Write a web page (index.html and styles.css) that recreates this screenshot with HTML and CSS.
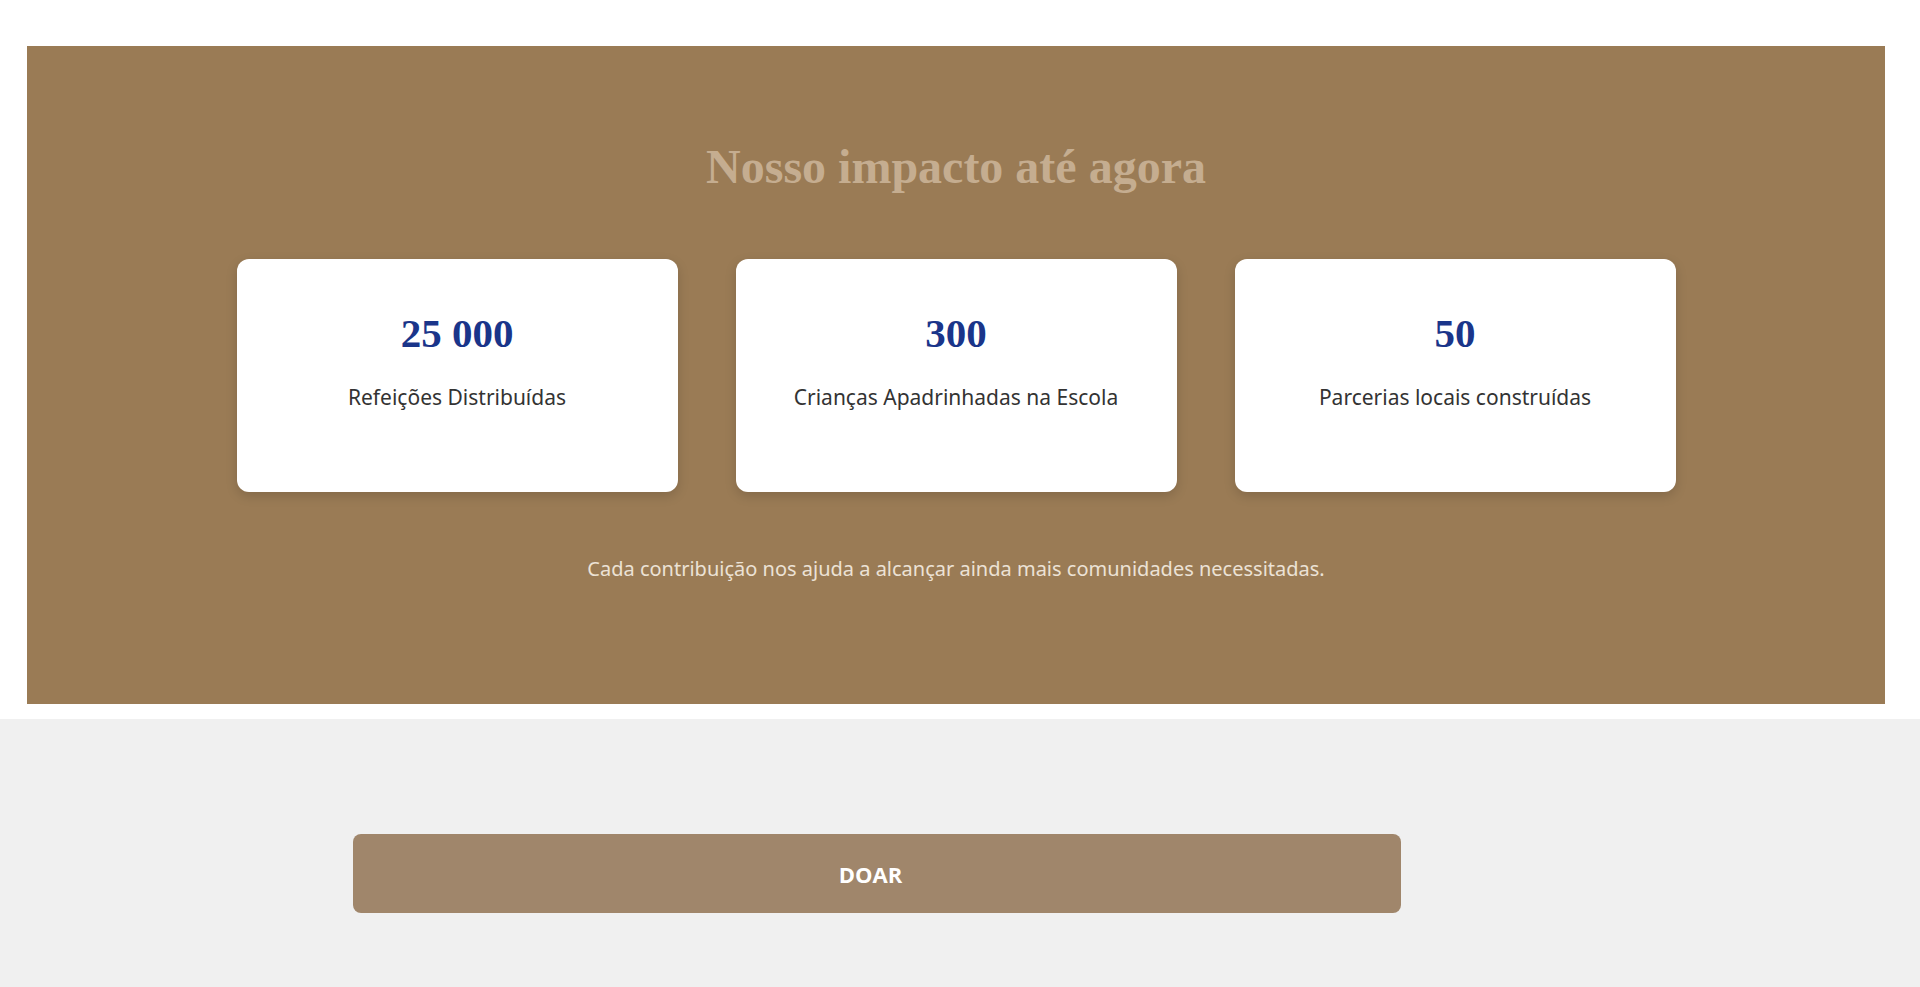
FILE: index.html
```html
<!DOCTYPE html>
<html lang="pt-br">
<head>
  <meta charset="UTF-8">
  <meta name="viewport" content="width=device-width, initial-scale=1">
  <title>Nosso impacto</title>
  <link rel="stylesheet" href="styles.css">
</head>
<body>

  <section class="impacto">
    <h2 class="impacto-titulo">Nosso impacto até agora</h2>

    <div class="impacto-cards">
      <div class="card">
        <span class="card-numero">25 000</span>
        <p class="card-texto">Refeições Distribuídas</p>
      </div>
      <div class="card">
        <span class="card-numero">300</span>
        <p class="card-texto">Crianças Apadrinhadas na Escola</p>
      </div>
      <div class="card">
        <span class="card-numero">50</span>
        <p class="card-texto">Parcerias locais construídas</p>
      </div>
    </div>

    <p class="impacto-nota">Cada contribuição nos ajuda a alcançar ainda mais comunidades necessitadas.</p>
  </section>

  <section class="doacao">
    <button type="button" class="btn-doar">DOAR</button>
  </section>

</body>
</html>
```

FILE: styles.css
```css
body {
  margin: 0;
  padding: 0;
  background-color: #ffffff;
  font-family: 'Noto Sans', 'Open Sans', sans-serif;
}

.impacto {
  background-color: #9a7b55;
  margin: 46px 35px 15px 27px;
  padding: 97px 0 0;
  height: 561px;
  display: flex;
  flex-direction: column;
  align-items: center;
}

.impacto-titulo {
  margin: 0;
  font-family: 'Liberation Serif', serif;
  font-size: 48px;
  font-weight: 700;
  color: #c5ad90;
  line-height: 1;
}

.impacto-cards {
  display: flex;
  gap: 58px;
  margin-top: 68px;
}

.card {
  background-color: #ffffff;
  width: 441px;
  height: 233px;
  border-radius: 12px;
  box-shadow: 0 4px 12px rgba(0, 0, 0, 0.15);
  display: flex;
  flex-direction: column;
  align-items: center;
  box-sizing: border-box;
  padding-top: 54px;
}

.card-numero {
  font-family: 'Liberation Serif', serif;
  font-size: 41px;
  font-weight: 700;
  color: #1a358a;
  line-height: 1;
}

.card-texto {
  margin: 33px 0 0;
  font-size: 21px;
  color: #333333;
  line-height: 1;
}

.impacto-nota {
  margin: 67px 0 0;
  font-size: 20px;
  color: #ece2d5;
  line-height: 1;
}

.doacao {
  background-color: #f0f0f0;
  height: 268px;
  padding-top: 115px;
  box-sizing: border-box;
}

.btn-doar {
  display: block;
  margin-left: 353px;
  width: 1048px;
  height: 79px;
  padding: 0 13px 0 0;
  background-color: #a0866b;
  border: none;
  border-radius: 8px;
  color: #ffffff;
  font-family: 'Open Sans', sans-serif;
  font-size: 22px;
  font-weight: 700;
  cursor: pointer;
}
```
